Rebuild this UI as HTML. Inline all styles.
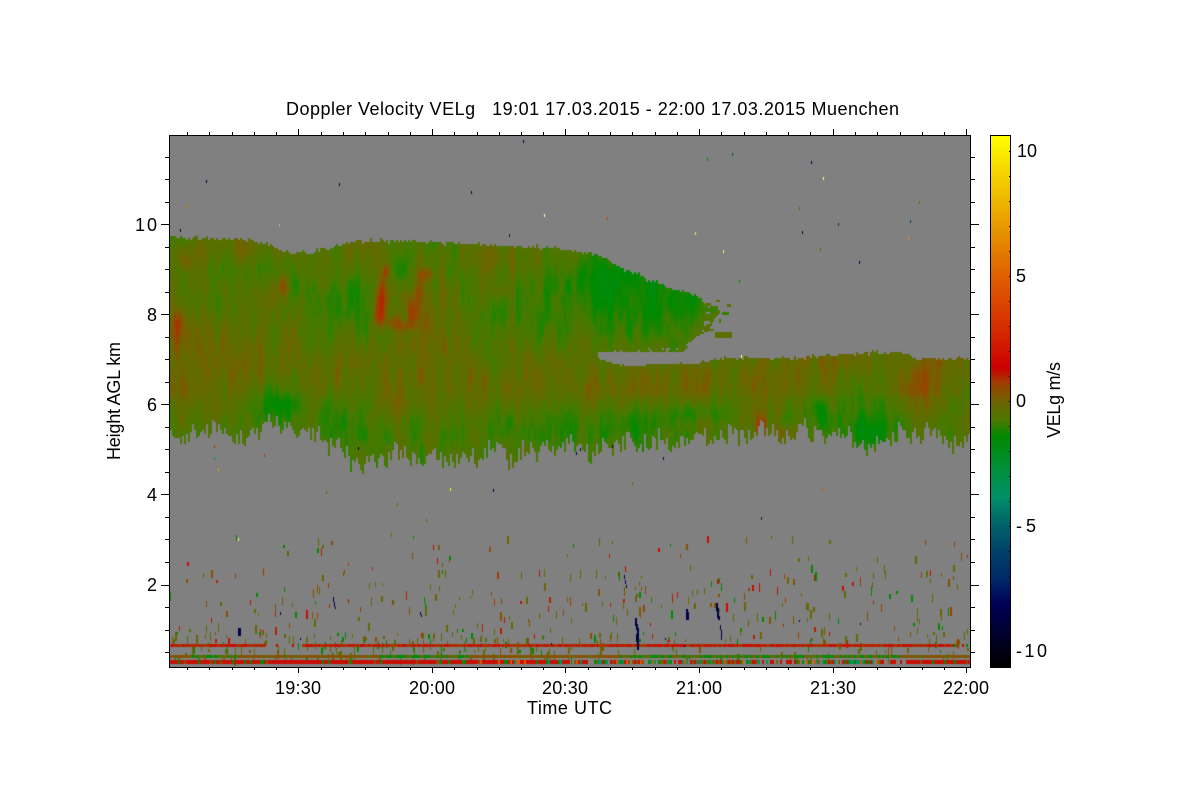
<!DOCTYPE html>
<html><head><meta charset="utf-8"><title>Doppler Velocity VELg</title>
<style>
html,body{margin:0;padding:0;background:#fff;width:1200px;height:800px;overflow:hidden}
svg,canvas{position:absolute;left:0;top:0}
text{font-family:"Liberation Sans",Arial,sans-serif;font-size:18px;fill:#000;white-space:pre}
</style></head><body>
<svg width="1200" height="800" viewBox="0 0 1200 800">
<defs><linearGradient id="f" x1="0" y1="0" x2="0" y2="1"><stop offset="0" stop-color="#5a7000"/><stop offset=".5" stop-color="#6b6400"/><stop offset="1" stop-color="#3a7e00"/></linearGradient></defs>
<rect x="169" y="135" width="801" height="532" fill="#808080"/>
<polygon fill="url(#f)" points="169,236 240,238 295,254 345,242 420,241 560,248 600,255 650,280 690,292 720,312 690,345 680,351 597,352 620,365 740,357 860,352 920,358 970,357 970,438 880,437 862,448 800,425 700,440 600,445 510,458 430,460 360,462 290,435 265,425 200,428 169,435"/>
</svg>
<canvas id="c" width="1200" height="800"></canvas>
<svg width="1200" height="800" viewBox="0 0 1200 800">
<defs><linearGradient id="cb" x1="0" y1="0" x2="0" y2="1">
<stop offset="0" stop-color="#ffff00"/><stop offset=".186" stop-color="#e69000"/><stop offset=".263" stop-color="#e06000"/><stop offset=".342" stop-color="#d83800"/><stop offset=".438" stop-color="#cc0000"/><stop offset=".464" stop-color="#a03c00"/><stop offset=".5" stop-color="#6e6200"/><stop offset=".536" stop-color="#4a7800"/><stop offset=".566" stop-color="#008a00"/><stop offset=".641" stop-color="#009048"/><stop offset=".679" stop-color="#009068"/><stop offset=".724" stop-color="#006868"/><stop offset=".784" stop-color="#004068"/><stop offset=".835" stop-color="#002868"/><stop offset=".88" stop-color="#000058"/><stop offset=".932" stop-color="#000030"/><stop offset="1" stop-color="#000000"/>
</linearGradient></defs>
<g shape-rendering="crispEdges" fill="none" stroke="#000" stroke-width="1">
<rect x="169.5" y="135.5" width="801" height="532" stroke-width="1.4"/>
<rect x="990.5" y="135.5" width="20" height="532" fill="url(#cb)" stroke-width="1.4"/>
<path d="M298.5 129V135M432.5 129V135M565.5 129V135M699.5 129V135M833.5 129V135M966.5 129V135M298.5 667V673M432.5 667V673M565.5 667V673M699.5 667V673M833.5 667V673M966.5 667V673"/>
<path d="M187.5 132V135M209.5 132V135M232.5 132V135M254.5 132V135M276.5 132V135M321.5 132V135M343.5 132V135M365.5 132V135M388.5 132V135M410.5 132V135M454.5 132V135M477.5 132V135M499.5 132V135M521.5 132V135M543.5 132V135M588.5 132V135M610.5 132V135M632.5 132V135M655.5 132V135M677.5 132V135M721.5 132V135M744.5 132V135M766.5 132V135M788.5 132V135M810.5 132V135M855.5 132V135M877.5 132V135M900.5 132V135M922.5 132V135M944.5 132V135"/>
<path d="M187.5 667V670M209.5 667V670M232.5 667V670M254.5 667V670M276.5 667V670M321.5 667V670M343.5 667V670M365.5 667V670M388.5 667V670M410.5 667V670M454.5 667V670M477.5 667V670M499.5 667V670M521.5 667V670M543.5 667V670M588.5 667V670M610.5 667V670M632.5 667V670M655.5 667V670M677.5 667V670M721.5 667V670M744.5 667V670M766.5 667V670M788.5 667V670M810.5 667V670M855.5 667V670M877.5 667V670M900.5 667V670M922.5 667V670M944.5 667V670"/>
<path d="M161 224.5H169M161 314.5H169M161 404.5H169M161 494.5H169M161 585.5H169M970 224.5H979M970 314.5H979M970 404.5H979M970 494.5H979M970 585.5H979"/>
<path d="M165 157.5H169M165 179.5H169M165 202.5H169M165 247.5H169M165 269.5H169M165 292.5H169M165 337.5H169M165 359.5H169M165 382.5H169M165 427.5H169M165 449.5H169M165 472.5H169M165 517.5H169M165 539.5H169M165 562.5H169M165 607.5H169M165 630.5H169M165 652.5H169"/>
<path d="M970 157.5H975M970 179.5H975M970 202.5H975M970 247.5H975M970 269.5H975M970 292.5H975M970 337.5H975M970 359.5H975M970 382.5H975M970 427.5H975M970 449.5H975M970 472.5H975M970 517.5H975M970 539.5H975M970 562.5H975M970 607.5H975M970 630.5H975M970 652.5H975"/>
<path d="M1009 151.5H1011M1009 176.5H1011M1009 201.5H1011M1009 226.5H1011M1009 251.5H1011M1009 276.5H1011M1009 301.5H1011M1009 326.5H1011M1009 351.5H1011M1009 376.5H1011M1009 401.5H1011M1009 426.5H1011M1009 451.5H1011M1009 476.5H1011M1009 501.5H1011M1009 526.5H1011M1009 551.5H1011M1009 576.5H1011M1009 601.5H1011M1009 626.5H1011M1009 651.5H1011"/>
</g>
<text x="286" y="115" textLength="613" lengthAdjust="spacing" xml:space="preserve">Doppler Velocity VELg   19:01 17.03.2015 - 22:00 17.03.2015 Muenchen</text>
<text x="275" y="694" textLength="46" lengthAdjust="spacing">19:30</text>
<text x="409" y="694" textLength="46" lengthAdjust="spacing">20:00</text>
<text x="542" y="694" textLength="46" lengthAdjust="spacing">20:30</text>
<text x="676" y="694" textLength="46" lengthAdjust="spacing">21:00</text>
<text x="810" y="694" textLength="46" lengthAdjust="spacing">21:30</text>
<text x="943" y="694" textLength="46" lengthAdjust="spacing">22:00</text>
<text x="527" y="714" textLength="85" lengthAdjust="spacing">Time UTC</text>
<text x="135" y="231" textLength="22" lengthAdjust="spacing">10</text>
<text x="147" y="321">8</text>
<text x="147" y="411">6</text>
<text x="147" y="501">4</text>
<text x="147" y="591">2</text>
<text x="1017" y="157" textLength="20" lengthAdjust="spacing">10</text>
<text x="1016" y="282">5</text>
<text x="1016" y="407">0</text>
<text x="1016" y="532" textLength="20" lengthAdjust="spacing">-5</text>
<text x="1016" y="657" textLength="31" lengthAdjust="spacing">-10</text>
<text transform="translate(120,460) rotate(-90)" textLength="118" lengthAdjust="spacing">Height AGL km</text>
<text transform="translate(1060,438) rotate(-90)" textLength="76" lengthAdjust="spacing">VELg m/s</text>
</svg>
<script>
(function(){
var ctx=document.getElementById('c').getContext('2d');
var stops=[[10.64,255,255,0],[6.7,230,144,0],[5,224,96,0],[3.35,216,56,0],[1.6,204,8,0],[.75,160,60,0],[.25,126,88,0],[0,107,102,0],[-.75,70,122,0],[-1.4,0,138,0],[-3,0,144,72],[-3.8,0,144,104],[-4.75,0,104,104],[-6,0,64,104],[-7.1,0,40,104],[-8.1,0,0,88],[-9.2,0,0,48],[-10.7,0,0,0]];
function col(v){if(v>=10.64)return'rgb(255,255,0)';if(v<=-10.7)return'#000';
 for(var i=0;i<stops.length-1;i++){var a=stops[i],b=stops[i+1];if(v<=a[0]&&v>=b[0]){var t=(a[0]-v)/(a[0]-b[0]);
 return'rgb('+Math.round(a[1]+(b[1]-a[1])*t)+','+Math.round(a[2]+(b[2]-a[2])*t)+','+Math.round(a[3]+(b[3]-a[3])*t)+')';}}return'#000';}
var seed=12345;function R(){seed|=0;seed=seed+0x6D2B79F5|0;var t=Math.imul(seed^seed>>>15,1|seed);t=t+Math.imul(t^t>>>7,61|t)^t;return((t^t>>>14)>>>0)/4294967296;}
function h(i,j,k){var s=Math.sin(i*127.1+j*311.7+k*74.7)*43758.5453;return s-Math.floor(s);}
function sm(t){return t*t*(3-2*t);}
function N(x,y,k){var i=Math.floor(x),j=Math.floor(y),u=sm(x-i),w=sm(y-j);
 return (h(i,j,k)*(1-u)+h(i+1,j,k)*u)*(1-w)+(h(i,j+1,k)*(1-u)+h(i+1,j+1,k)*u)*w;}
function L(p,x){if(x<=p[0][0])return p[0][1];for(var i=0;i<p.length-1;i++){if(x<=p[i+1][0]){var t=(x-p[i][0])/(p[i+1][0]-p[i][0]);return p[i][1]+(p[i+1][1]-p[i][1])*t;}}return p[p.length-1][1];}
ctx.fillStyle='#808080';ctx.fillRect(170,136,800,531);
var top=[[169,236],[200,238],[240,238],[262,243],[280,249],[295,253],[320,250],[345,242],[365,240],[420,241],[500,245],[560,248],[600,255],[620,267],[650,280],[673,290],[690,292],[697,297],[715,306],[722,312]];
var upB=[[597,352],[683,350],[690,341],[697,335],[707,330],[715,315],[722,312]];
var lowT=[[597,357],[620,365],[700,362],[720,358],[740,357],[800,357],[860,352],[900,352],[920,358],[970,357]];
var bot=[[169,434],[178,438],[186,435],[200,426],[215,428],[230,435],[245,441],[255,434],[266,423],[278,424],[292,434],[320,438],[335,448],[347,457],[362,461],[400,454],[430,459],[470,457],[490,453],[510,457],[530,454],[550,448],[575,444],[590,450],[610,445],[625,446],[640,441],[660,439],[700,438],[740,436],[770,433],[785,437],[795,430],[800,421],[806,431],[850,433],[862,447],[880,435],[940,436],[970,437]];
var lay=[[235,-.5],[300,-.52],[345,-.34],[385,-.25],[410,-.45],[435,-.65],[470,-.6]];
var blobs=[[380,305,4,15,1.35],[377,318,4,6,.5],[385,270,2.5,5,1.2],[383,285,3,10,.6],[392,322,5,5,.8],[425,273,7,5,1.05],[418,292,3,10,.7],[412,310,4,10,.95],[405,325,6,4,.7],[425,320,4,10,.45],
[283,285,3.5,9,1.05],[185,262,4,6,.6],[177,325,5,12,.95],[500,290,6,6,.5],[445,345,3,10,.4],
[278,405,18,14,-.85],[295,282,5,12,-.5],[350,300,15,20,-.55],[400,268,5,10,-.5],[495,310,8,15,-.3],[215,300,25,20,-.25],[240,270,30,8,-.2],
[200,250,40,10,.3],[480,258,60,10,.2],[190,345,25,20,.15],
[640,300,50,34,-.95],[590,272,30,16,-.7],[550,320,30,25,-.2],
[450,420,120,14,-.2],[340,420,30,20,-.25],[520,425,30,15,-.3],[180,420,8,15,.45],[250,380,40,15,.12],[390,402,12,12,.4],[465,385,30,15,.05],
[760,425,5,8,.9],[785,432,7,6,.8],[750,410,5,6,.35],[660,385,60,15,.18],[920,385,14,20,.45],[925,418,8,12,.35],[860,432,20,13,-.85],[700,412,25,7,-.6],[830,410,25,12,-.45],[965,400,8,12,-.3],[640,423,18,14,-.6],[590,425,20,16,-.4],[855,385,20,15,-.25],[880,415,20,15,-.2]];
function val(x,y){var v=L(lay,y);
 if(x>600&&y>350&&y<395)v+=.12;
 v+=(N(x/7,y/42,1)-.5)*.65+(N(x/3,y/15,2)-.5)*.5+(N(x/2,y/3,3)-.5)*.16+(N(x/45,y/30,8)-.5)*.35;
 for(var i=0;i<blobs.length;i++){var b=blobs[i],dx=(x-b[0])/b[2],dy=(y-b[1])/b[3],d=dx*dx+dy*dy;if(d<9)v+=b[4]*Math.exp(-d/2);}
 return Math.max(v,-1.75);}
var x,y;
for(x=170;x<970;x+=2){
 var tj=(R()<.12?-2:0)+(R()<.15?2:0)+Math.floor(R()*2);
 var bj=(N(x/1.7,0,5)-.5)*24+(N(x/8,0,6)-.5)*10;
 var tp=x<722?L(top,x)+tj:L(lowT,x)+tj;
 var bt=L(bot,x)+bj;
 for(y=Math.round(tp/2)*2;y<bt;y+=2){
  var inGap=false;
  if(x>=597&&x<722){var ub=L(upB,x)+(R()<.12?-3:0),lt=L(lowT,x)+(R()<.1?-2:0);if(y>=ub&&y<lt)inGap=true;}
  if(inGap)continue;
  if(x>702&&x<722&&y<335&&N(x/4,y/3,7)<.38)continue;
  ctx.fillStyle=col(val(x,y));ctx.fillRect(x,y,2,2);
 }
}
// wisps right of the upper lobe
[[715,332,17,6,-.3],[699,308,18,4,-.9],[705,303,6,3,-.4],[703,318,10,3,-.5],[722,312,7,3,-.9],[727,304,4,3,-.3],[716,300,4,2,-.4],[706,329,8,2,-.4],[719,319,2,4,-.9]].forEach(function(r){ctx.fillStyle=col(r[4]);ctx.fillRect(r[0],r[1],r[2],r[3]);});
// speckle palette
var sv=[0,0,0,.35,.35,-.4,-1.4,-1.4,1.5,1.2,.7,-.1];
function streak(xx,yy,w,hh){ctx.fillStyle=col(sv[Math.floor(R()*sv.length)]);ctx.fillRect(xx,yy,w,hh);}
var i;
for(i=0;i<60;i++)streak(170+Math.floor(R()*798),532+Math.floor(R()*45),R()<.25?2:1,3+Math.floor(R()*6));
for(i=0;i<260;i++)streak(170+Math.floor(R()*798),570+Math.floor(R()*74),R()<.3?2:1,3+Math.floor(R()*7));
// dense layer around first band
for(i=0;i<300;i++){var xs=170+Math.floor(R()*798);var dens=(xs<570)?1:(R()<.5?1:0);if(!dens)continue;ctx.fillStyle=col([0,0,-.1,.35,-.4,-1.4][Math.floor(R()*6)]);ctx.fillRect(xs,632+Math.floor(R()*26),R()<.3?2:1,3+Math.floor(R()*7));}
// bands
for(x=170;x<970;x+=2){
 var gap=(x>=266&&x<302);
 if(!gap&&(x<953||R()<.4)){ctx.fillStyle=col(x>=953?(R()<.5?1.5:-1.4):.7+R()*.95);ctx.fillRect(x,644,2,3);}
 else if(gap&&R()<.05){ctx.fillStyle=col(1.5);ctx.fillRect(x,644,2,3);}
 var m=(x>=380&&x<470)||(x>=620&&x<900)||(x<235&&x>=190);
 var r=R();ctx.fillStyle=col(m?(r<.5?-1.4:r<.8?-.5:.1):(r<.8?.32:r<.9?.5:-.6));ctx.fillRect(x,655,2,3);
 var v3,r3=R();
 if(x>=570&&x<880){v3=r3<.18?null:r3<.42?1.5:r3<.55?.4:r3<.68?-1.4:r3<.8?-3.6:r3<.9?4.5:-.2;}
 else if(x>=880&&x<905){v3=r3<.75?null:1.5;}
 else if(x>=480&&x<570){v3=r3<.7?1.5:r3<.8?-1.4:r3<.9?4.5:-3.6;}
 else {v3=r3<.86?1.5:r3<.94?-1.4:.4;}
 if(v3!==null){ctx.fillStyle=col(v3);ctx.fillRect(x,660,2,4);}
}
// dark falls
[[635,618,2,8],[636,624,2,6],[637,628,2,8],[636,634,3,8],[637,640,2,10],[686,609,2,5],[686,612,3,8],[716,603,2,8],[717,608,2,10],[718,616,2,4],[720,625,1,5],[721,630,1,4],[721,634,1,6],[333,597,1,5],[334,602,1,5],[335,607,1,2],[238,628,3,8],[420,612,1,3],[421,615,1,2],[280,612,1,3],[624,575,1,4],[625,580,1,4],[626,585,1,3],[300,638,1,2],[551,643,1,2],[665,638,1,2],[799,620,1,2],[860,623,1,2],[684,645,1,2]].forEach(function(r){ctx.fillStyle='#000048';ctx.fillRect(r[0],r[1],r[2],r[3]);});
// isolated specks
[[523,140,'#000048'],[206,180,'#000048'],[339,183,'#000048'],[471,191,'#000048'],[186,205,'#d08000'],[811,161,'#000048'],[732,153,'#004068'],[707,158,'#008a00'],[823,177,'#ffff99'],[799,207,'#6e6200'],[838,223,'#004068'],[910,220,'#004068'],[919,201,'#4a7800'],[802,231,'#000048'],[908,237,'#e6a000'],[859,261,'#000048'],[544,214,'#ffffaa'],[607,217,'#d83800'],[509,234,'#002040'],[695,232,'#ffdd88'],[723,250,'#ffee88'],[279,224,'#ccaa88'],[180,229,'#000048'],[820,248,'#4a7800'],[739,280,'#008a00'],[741,355,'#ffff99'],[663,457,'#000048'],[493,489,'#000048'],[450,488,'#ffff00'],[822,487,'#d85000'],[761,517,'#002040'],[238,538,'#ffee88'],[214,457,'#009068'],[218,468,'#e6a000'],[326,491,'#6e6200'],[397,503,'#4a7800'],[632,482,'#6e6200'],[426,519,'#4a7800'],[264,454,'#a03c00'],[576,452,'#000048'],[612,445,'#000048'],[358,447,'#000048'],[580,448,'#000048'],[214,445,'#a03c00']].forEach(function(s){ctx.fillStyle=s[2];ctx.fillRect(s[0],s[1],1,3);});
})();
</script>
</body></html>
